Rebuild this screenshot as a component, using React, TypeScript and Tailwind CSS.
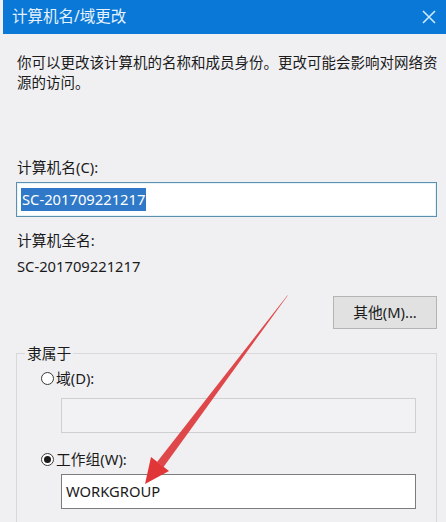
import React from 'react'

const font = { fontFamily: '"Noto Sans", "Noto Sans CJK SC", sans-serif' }

const Radio = ({ checked, label }: { checked?: boolean; label: string }) => (
  <div className="flex items-center h-[20px] pl-[24px] gap-[2px]">
    <span className="w-[13px] h-[13px] rounded-full border border-[#3a3a3a] bg-white flex items-center justify-center">
      {checked && <span className="w-[7px] h-[7px] rounded-full bg-[#1b1b1b]" />}
    </span>
    <span className="text-[14.75px] leading-[20px] text-[#1a1a1a]">{label}</span>
  </div>
)

export default function App() {
  return (
    <div className="relative w-[446px] h-[522px] overflow-hidden bg-[#f0f0f3]" style={font}>
      {/* Title bar */}
      <div className="ml-[3px] h-[34px] bg-[#0a78d6] flex items-center justify-between pl-[9px] pr-[6px]">
        <span className="text-[15.5px] text-[#e6f2fc] leading-none">计算机名/域更改</span>
        <svg width="14" height="14" viewBox="0 0 14 14" className="mr-[4px]">
          <path d="M1 1 L13 13 M13 1 L1 13" stroke="#cde9fa" strokeWidth="1.6" />
        </svg>
      </div>

      <div className="pl-[16px] pr-[9px] pt-[18px] text-[#1a1a1a]">
        <p className="pl-[1px] text-[14.5px] leading-[20px]">
          <span className="whitespace-nowrap">你可以更改该计算机的名称和成员身份。更改可能会影响对网络资</span>
          <br />
          源的访问。
        </p>

        <p className="mt-[65px] pl-[1px] text-[14.75px] leading-[20px]">计算机名(C):</p>
        <div className="mt-[5px] h-[35px] border border-[#5f8fae] bg-white shadow-[inset_0_0_0_1px_#e2f3fb] flex items-center pl-[4px]">
          <span className="bg-[#2f79c8] text-white text-[14.75px] leading-[23px] px-[1px]">SC-201709221217</span>
        </div>

        <p className="mt-[13px] pl-[1px] text-[14.75px] leading-[20px]">计算机全名:</p>
        <p className="mt-[6px] pl-[1px] text-[14.75px] leading-[20px]">SC-201709221217</p>

        <div className="flex justify-end mt-[20px]">
          <button className="w-[104px] h-[33px] bg-[#e1e1e1] border border-[#b4b4b4] text-[14.75px] text-[#1a1a1a]">
            其他(M)...
          </button>
        </div>

        {/* Member of */}
        <div className="relative mt-[24px] border border-[#d9d9dc] pt-[14px] pb-[20px]">
          <span className="absolute left-[8px] top-[-11px] px-[2px] bg-[#f0f0f3] text-[14.75px] leading-[20px]">隶属于</span>
          <Radio label="域(D):" />
          <div className="mt-[10px] ml-[44px] mr-[20px] h-[35px] border border-[#cfcfd2] bg-[#f2f2f4]" />
          <div className="mt-[16px]">
            <Radio checked label="工作组(W):" />
          </div>
          <div className="mt-[5px] ml-[44px] mr-[20px] h-[35px] border border-[#7c7c7c] bg-white flex items-center pl-[4px]">
            <span className="text-[14.75px]">WORKGROUP</span>
          </div>
        </div>
      </div>

      {/* Red annotation arrow */}
      <svg className="absolute inset-0 pointer-events-none" width="446" height="522" viewBox="0 0 446 522">
        <polygon points="288.5,294.5 286.5,296.5 157,462 163.5,467" fill="#dd3a3c" opacity="0.92" />
        <polygon points="145,484 151,457 169,471" fill="#e03638" />
      </svg>
    </div>
  )
}
